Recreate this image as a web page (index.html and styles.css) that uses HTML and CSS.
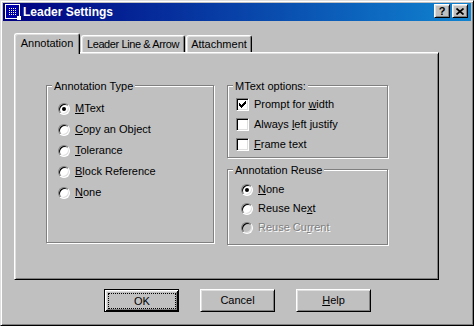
FILE: index.html
```html
<!DOCTYPE html>
<html>
<head>
    <meta charset="UTF-8">
    <title>Leader Settings</title>
    <link rel="stylesheet" href="styles.css">
</head>
<body>
<div class="dialog">
    <div class="titlebar">
        <svg class="app-icon" viewBox="0 0 16 16" width="16" height="16">
            <defs>
                <pattern id="dots" width="2" height="2" patternUnits="userSpaceOnUse">
                    <rect width="1" height="1" fill="#fff"/>
                </pattern>
            </defs>
            <rect x="0.5" y="0.5" width="14" height="14" fill="#0000a8" stroke="#fff"/>
            <rect x="3" y="3" width="9" height="9" fill="url(#dots)"/>
            <rect x="12" y="12" width="4" height="4" fill="#fff"/>
        </svg>
        <span class="title">Leader Settings</span>
        <span class="cap-btn">?</span>
        <span class="cap-btn cap-close">
            <svg viewBox="0 0 8 7" width="8" height="7">
                <path d="M0.5 0.5L7.5 6.5M7.5 0.5L0.5 6.5" stroke="#000" stroke-width="1.7"/>
            </svg>
        </span>
    </div>

    <div class="client">
        <!-- tabs -->
        <div class="tabs">
            <div class="tab tab-active tab-annotation">Annotation</div>
            <div class="tab tab-leader">Leader Line &amp; Arrow</div>
            <div class="tab tab-attach">Attachment</div>
        </div>

        <div class="page">
            <div class="group group-type">
                <div class="legend">Annotation Type</div>
                <div class="opts opts-type">
                    <div class="opt"><span class="radio checked"></span><span><u>M</u>Text</span></div>
                    <div class="opt"><span class="radio"></span><span><u>C</u>opy an Object</span></div>
                    <div class="opt"><span class="radio"></span><span><u>T</u>olerance</span></div>
                    <div class="opt"><span class="radio"></span><span><u>B</u>lock Reference</span></div>
                    <div class="opt"><span class="radio"></span><span><u>N</u>one</span></div>
                </div>
            </div>

            <div class="col-right">
                <div class="group group-mtext">
                    <div class="legend">MText options:</div>
                    <div class="opts opts-mtext">
                        <div class="opt">
                            <span class="check">
                                <svg viewBox="0 0 9 9" width="9" height="9" shape-rendering="crispEdges">
                                    <path d="M1 3h1v3h-1zM2 4h1v3h-1zM3 5h1v3h-1zM4 4h1v3h-1zM5 3h1v3h-1zM6 2h1v3h-1zM7 1h1v3h-1z" fill="#000"/>
                                </svg>
                            </span>
                            <span>Prompt for <u>w</u>idth</span>
                        </div>
                        <div class="opt"><span class="check"></span><span>Always <u>l</u>eft justify</span></div>
                        <div class="opt"><span class="check"></span><span><u>F</u>rame text</span></div>
                    </div>
                </div>

                <div class="group group-reuse">
                    <div class="legend">Annotation Reuse</div>
                    <div class="opts opts-reuse">
                        <div class="opt"><span class="radio checked"></span><span><u>N</u>one</span></div>
                        <div class="opt"><span class="radio"></span><span>Reuse Ne<u>x</u>t</span></div>
                        <div class="opt"><span class="radio disabled"></span><span class="disabled-text">Reuse Cu<u>r</u>rent</span></div>
                    </div>
                </div>
            </div>
        </div>

        <div class="buttons">
            <button class="btn btn-default"><span class="focus">OK</span></button>
            <button class="btn">Cancel</button>
            <button class="btn"><u>H</u>elp</button>
        </div>
    </div>
</div>
</body>
</html>
```

FILE: styles.css
```css
* {
    margin: 0;
    padding: 0;
    box-sizing: border-box;
}

body {
    background: #c0c0c0;
    font-family: "Liberation Sans", Arial, sans-serif;
    font-size: 11px;
    color: #000;
}

.dialog {
    width: 474px;
    height: 326px;
    padding: 2px;
    background: #c0c0c0;
    border: 1px solid;
    border-color: #dfdfdf #000 #000 #dfdfdf;
    box-shadow: inset 1px 1px #fff, inset -1px -1px #808080;
}

/* title bar */
.titlebar {
    height: 18px;
    display: flex;
    align-items: center;
    padding: 0 3px 0 2px;
    background: linear-gradient(to right, #000080, #1084d0);
    color: #fff;
}

.app-icon {
    flex: none;
    display: block;
    margin-right: 2px;
}

.title {
    flex: 1;
    font-size: 12px;
    font-weight: bold;
    line-height: 18px;
}

.cap-btn {
    width: 16px;
    height: 14px;
    margin-bottom: 2px;
    display: flex;
    align-items: center;
    justify-content: center;
    background: #c0c0c0;
    color: #000;
    font-weight: bold;
    font-size: 11px;
    line-height: 1;
    border: 1px solid;
    border-color: #fff #000 #000 #fff;
    box-shadow: inset 1px 1px #dfdfdf, inset -1px -1px #808080;
}

.cap-close {
    margin-left: 2px;
}

.cap-close svg {
    display: block;
}

/* client area */
.client {
    padding: 12px 0 0 11px;
}

.tabs {
    height: 19px;
    display: flex;
    align-items: flex-end;
}

.tab {
    height: 17px;
    padding-top: 2px;
    text-align: center;
    line-height: 13px;
    white-space: nowrap;
    margin-left: 1px;
    background: #c0c0c0;
    border: 1px solid;
    border-bottom: none;
    border-color: #fff #000 #000 #fff;
    border-radius: 3px 3px 0 0;
    box-shadow: inset 1px 1px #dfdfdf, inset -1px 0 #808080;
}

.tab-active {
    height: 21px;
    padding-top: 3px;
    margin: 0 0 -2px 0;
    position: relative;
    z-index: 1;
}

.tab-annotation {
    width: 66px;
}

.tab-leader {
    width: 104px;
    letter-spacing: -0.4px;
}

.tab-attach {
    width: 66px;
}

.page {
    width: 425px;
    height: 228px;
    padding: 32px 0 0 31px;
    display: flex;
    align-items: flex-start;
    gap: 13px;
    border: 1px solid;
    border-color: #fff #000 #000 #fff;
    box-shadow: inset 1px 1px #dfdfdf, inset -1px -1px #808080;
}

/* etched group boxes */
.group {
    display: flex;
    flex-direction: column;
    border: 1px solid #808080;
    box-shadow: inset 1px 1px #fff, 1px 1px #fff;
}

.group-type {
    width: 168px;
    height: 158px;
}

.col-right {
    width: 161px;
    display: flex;
    flex-direction: column;
    gap: 11px;
}

.group-mtext {
    height: 73px;
}

.group-reuse {
    height: 76px;
}

.legend {
    align-self: flex-start;
    margin: -6px 0 0 5px;
    padding: 0 2px;
    line-height: 13px;
    background: #c0c0c0;
}

.opts {
    display: flex;
    flex-direction: column;
}

.opt {
    display: flex;
    align-items: center;
    gap: 5px;
    line-height: 13px;
}

.opts-type {
    margin-top: 5px;
    padding-left: 11px;
}

.opts-type .opt {
    height: 21px;
}

.opts-mtext {
    margin-top: 1px;
    padding-left: 8px;
}

.opts-mtext .opt {
    height: 20px;
}

.opts-reuse {
    margin-top: 3px;
    padding-left: 13px;
}

.opts-reuse .opt {
    height: 19px;
}

.radio {
    flex: none;
    width: 12px;
    height: 12px;
    display: flex;
    align-items: center;
    justify-content: center;
    background: #fff;
    border: 1px solid;
    border-color: #808080 #fff #fff #808080;
    border-radius: 50%;
    box-shadow: inset 1px 1px #000, inset -1px -1px #dfdfdf;
}

.radio.checked::after {
    content: "";
    width: 4px;
    height: 4px;
    border-radius: 50%;
    background: #000;
}

.radio.disabled {
    background: #c0c0c0;
}

.check {
    flex: none;
    width: 13px;
    height: 13px;
    padding: 1px;
    background: #fff;
    border: 1px solid;
    border-color: #808080 #fff #fff #808080;
    box-shadow: inset 1px 1px #000, inset -1px -1px #dfdfdf;
}

.check svg {
    display: block;
}

.disabled-text {
    color: #808080;
    text-shadow: 1px 1px #fff;
}

/* push buttons */
.buttons {
    display: flex;
    gap: 21px;
    margin: 9px 0 0 90px;
}

.btn {
    width: 75px;
    height: 23px;
    padding: 0;
    display: flex;
    align-items: center;
    justify-content: center;
    font: inherit;
    line-height: 13px;
    color: #000;
    background: #c0c0c0;
    border: 1px solid;
    border-color: #fff #000 #000 #fff;
    box-shadow: inset 1px 1px #dfdfdf, inset -1px -1px #808080;
}

.btn-default {
    align-items: stretch;
    border-color: #000;
    box-shadow: inset 1px 1px #fff, inset -1px -1px #000, inset 2px 2px #dfdfdf, inset -2px -2px #808080;
}

.focus {
    flex: 1;
    margin: 3px 2px 2px 3px;
    display: flex;
    align-items: center;
    justify-content: center;
    border: 1px dotted #000;
}
```
